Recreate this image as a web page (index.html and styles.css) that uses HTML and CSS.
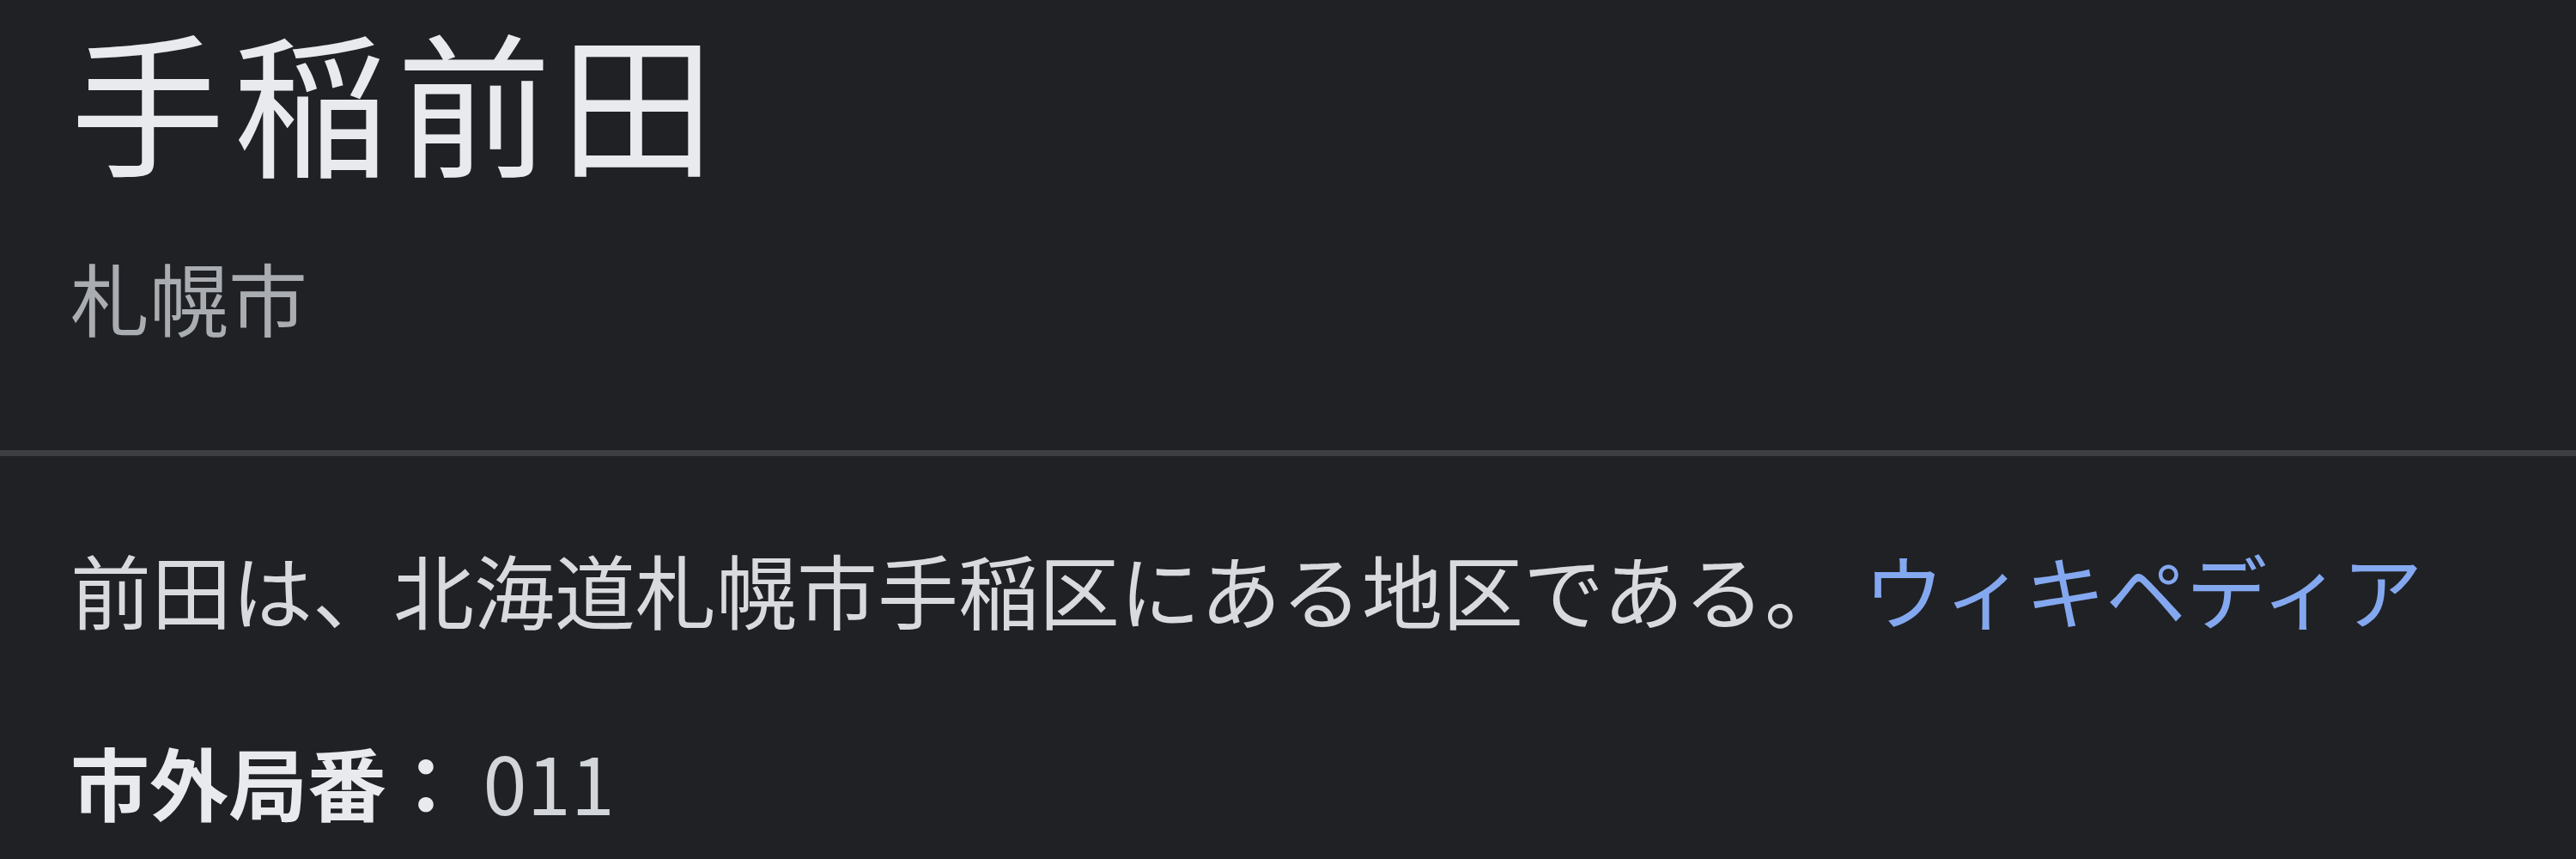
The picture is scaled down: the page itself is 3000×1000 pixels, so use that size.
FILE: index.html
```html
<!DOCTYPE html>
<html lang="ja">
<head>
    <meta charset="UTF-8">
    <title>手稲前田</title>
    <link rel="stylesheet" href="styles.css">
</head>
<body>

    <div class="panel">
        <div class="header">
            <h1 class="title">手稲前田</h1>
            <div class="subtitle">札幌市</div>
        </div>

        <div class="divider"></div>

        <div class="body">
            <p class="desc">前田は、北海道札幌市手稲区にある地区である。 <a href="#" class="source">ウィキペディア</a></p>
            <p class="fact"><span class="fact-label">市外局番：</span> 011</p>
        </div>
    </div>

</body>
</html>
```

FILE: styles.css
```css
* {
    margin: 0;
    padding: 0;
    box-sizing: border-box;
}

body {
    background-color: #202124;
    font-family: "Noto Sans CJK JP", "Noto Sans", sans-serif;
    color: #e8eaed;
    height: 1000px;
    overflow: hidden;
}

.panel {
    display: flex;
    flex-direction: column;
}

.header {
    padding: 6px 82px 0;
    height: 524px;
}

.title {
    font-size: 180px;
    font-weight: 400;
    line-height: 1.2;
    letter-spacing: 10px;
    color: #e8eaed;
}

.subtitle {
    margin-top: 68px;
    font-size: 92px;
    line-height: 1.2;
    color: #a9adb2;
}

.divider {
    height: 7px;
    background-color: #3c3e42;
}

.body {
    padding: 98px 82px 0;
}

.desc {
    font-size: 94px;
    line-height: 1.2;
    color: #d8dade;
}

.source {
    color: #84a8f0;
    text-decoration: none;
}

.fact {
    margin-top: 112px;
    font-size: 92px;
    line-height: 1.2;
    color: #d2d5d9;
}

.fact-label {
    font-weight: 700;
    color: #e8eaed;
}
```
